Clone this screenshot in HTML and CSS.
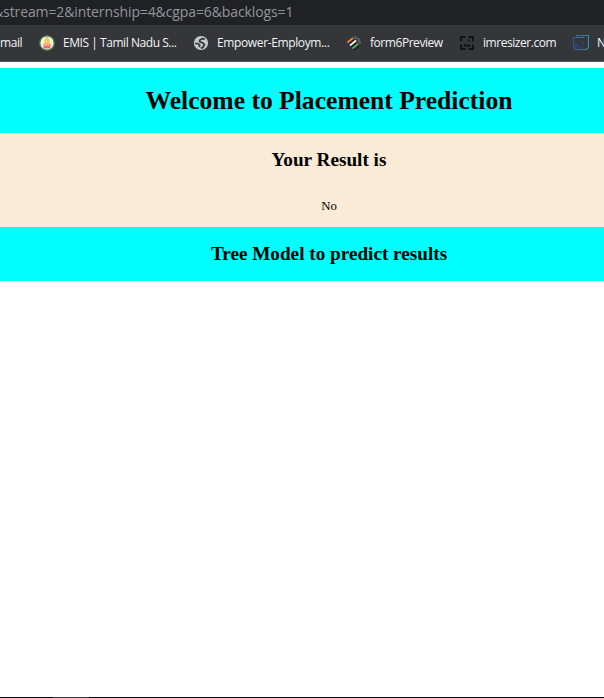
FILE: index.html
```
<!DOCTYPE html>
<html lang="en">
<head>
<meta charset="utf-8">
<title>Placement Prediction</title>
<link rel="stylesheet" href="styles.css">
</head>
<body>
<div class="address"><span class="url">&amp;stream=2&amp;internship=4&amp;cgpa=6&amp;backlogs=1</span></div>
<nav class="bookmarks">
  <span class="label mail">mail</span>
  <svg class="icon emblem" viewBox="0 0 16 16"><circle cx="8" cy="8" r="7.2" fill="#f5f5e6" stroke="#408450" stroke-width="1.3"/><path d="M6 3h4l2 8H4z" fill="#efd261"/><path d="M7 2h2v4H7z" fill="#e5c96a"/><path d="M3.5 9.5 8 8l4.5 1.5-1 3.5h-7z" fill="#f5a28e"/><path d="M5 11h6v2.5H5z" fill="#ee6668"/></svg>
  <span class="label emis">EMIS | Tamil Nadu S...</span>
  <svg class="icon globe" viewBox="0 0 16 16"><circle cx="8" cy="8" r="7.1" fill="#c5c8cc"/><path d="M11.8 4.2 9 3.7 6.6 5.4l.4 1.7 3.1.8 1.3 1.8-1.6 2.8-2 .8M2.2 8.4l3.1.3 1.4 1.7-.4 1.8" fill="none" stroke="#35363a" stroke-width="1.7"/></svg>
  <span class="label empower">Empower-Employm...</span>
  <svg class="icon stripes" viewBox="0 0 16 16"><path d="M3 9 8 5M5 12l5-4M8 15l5-4" stroke="#151619" stroke-width="1.2"/><g fill="none" stroke-width="1.9"><path d="M1.5 7.5 7 3" stroke="#ed8132"/><path d="M4 10.5 10 5.5" stroke="#f4f4f4"/><path d="M6.5 13.5 12 9" stroke="#4caf50"/></g><path d="M8 1h3v3H8zm3 2h3v3h-3zm1 3h3v3h-3z" fill="#55575b"/></svg>
  <span class="label form">form6Preview</span>
  <svg class="icon resize" viewBox="0 0 16 16"><path d="M6.5 2H2v4.5m0 3V14h4.5m3 0H14V9.500m0-3V2H9.500" fill="none" stroke="#111214" stroke-width="1.8"/><path d="m4 11.500 2.500-3 2 2L10 9l2 2.500z" fill="#111214"/><circle cx="10" cy="5.500" r="1" fill="#111214"/></svg>
  <span class="label imres">imresizer.com</span>
  <svg class="icon chip" viewBox="0 0 16 16"><defs><linearGradient id="edge"><stop stop-color="#345591"/><stop offset="1" stop-color="#3f909a"/></linearGradient></defs><path d="M3.500 2.500v-2h12v12l-2 2h-11l-2-2v-10h3M3.500 2.500h8" fill="none" stroke="url(#edge)" stroke-width="1.2"/><path d="M2.500 12V8.500M4.500 11V8M2 12.500l3-2 2 3M8 7.500h2v2M8 12h2" fill="none" stroke="#2a4685" stroke-width="1.2"/></svg>
  <span class="label next">N</span>
</nav>
<main class="page">
  <header class="banner"><h1>Welcome to Placement Prediction</h1></header>
  <section class="result"><h2>Your Result is</h2><p>No</p></section>
  <section class="model"><h2>Tree Model to predict results</h2></section>
</main>
<footer class="edge"><div class="edge-mark"></div></footer>
</body>
</html>
```
FILE: styles.css
```
* { box-sizing: border-box; }
body { margin: 0; height: 698px; overflow: hidden; background: #fff; display: flex; flex-direction: column; }
.address { flex: none; height: 25px; background: #202124; color: #92969b; font: 14px/23px "Open Sans", sans-serif; white-space: nowrap; overflow: hidden; }
.url { display: inline-block; margin-left: -7px; letter-spacing: -0.11px; }
.bookmarks { flex: none; height: 37px; background: #35363a; border-bottom: 1px solid #5b5c60; display: flex; align-items: center; color: #f3f4f5; font: 12px/16px "Open Sans", sans-serif; white-space: nowrap; overflow: hidden; }
.label, .icon { flex: none; }
.label { letter-spacing: -0.45px; }
.icon { width: 16px; height: 16px; margin-right: 8px; }
.mail { width: 39px; }
.emis { width: 130px; }
.empower { width: 129px; letter-spacing: -0.37px; }
.form { width: 89px; }
.imres { width: 90px; }
.page { flex: 1; width: 658px; padding-top: 6px; font-family: "Liberation Serif", serif; color: #000; text-align: center; }
h1, h2, p { margin: 0; }
.banner { height: 65px; background: #0ff; }
h1 { font-size: 25.6px; line-height: 65px; }
h2 { font-size: 19.2px; line-height: 54px; }
.result { height: 94px; background: #faebd7; }
.result p { padding-top: 1px; font-size: 12.8px; line-height: 37px; }
.model { height: 54px; background: #0ff; }
.edge { flex: none; height: 1px; background: #09090b; }
.edge-mark { width: 36px; height: 1px; margin-left: 53px; background: #3b3b3f; }
```
